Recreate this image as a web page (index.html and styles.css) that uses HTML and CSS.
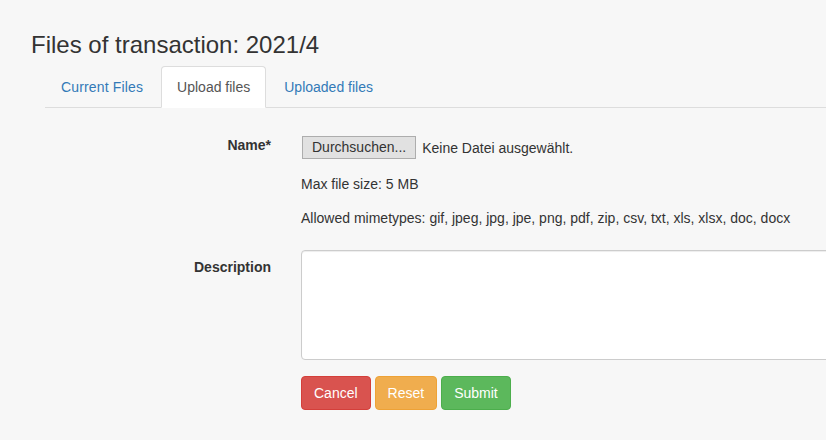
FILE: index.html
```html
<!DOCTYPE html>
<html lang="en">
<head>
<meta charset="utf-8">
<title>Files of transaction</title>
<link rel="stylesheet" href="styles.css">
</head>
<body>
<div class="page">
  <h1 class="title">Files of transaction: 2021/4</h1>
  <ul class="tabs">
    <li class="tab"><a href="#">Current Files</a></li>
    <li class="tab active"><a href="#">Upload files</a></li>
    <li class="tab"><a href="#">Uploaded files</a></li>
  </ul>
  <form class="form">
    <div class="row">
      <label class="label">Name*</label>
      <div class="field">
        <div class="file-picker">
          <span class="file-btn">Durchsuchen...</span>
          <span class="file-name">Keine Datei ausgewählt.</span>
        </div>
        <p class="help">Max file size: 5 MB</p>
        <p class="help">Allowed mimetypes: gif, jpeg, jpg, jpe, png, pdf, zip, csv, txt, xls, xlsx, doc, docx</p>
      </div>
    </div>
    <div class="row row-desc">
      <label class="label">Description</label>
      <div class="field">
        <textarea class="textarea"></textarea>
      </div>
    </div>
    <div class="row row-actions">
      <span></span>
      <div class="actions">
        <button type="button" class="btn btn-danger">Cancel</button>
        <button type="button" class="btn btn-warning">Reset</button>
        <button type="button" class="btn btn-success">Submit</button>
      </div>
    </div>
  </form>
</div>
</body>
</html>
```

FILE: styles.css
```css
html, body {
  margin: 0;
  padding: 0;
  background: #f7f7f7;
  overflow: hidden;
}
body {
  font-family: "Liberation Sans", Arial, sans-serif;
  font-size: 14px;
  line-height: 20px;
  color: #333;
}
.page {
  width: 1000px;
  padding-left: 31px;
}
.title {
  margin: 32px 0 8px;
  font-size: 24px;
  line-height: 26px;
  font-weight: 400;
  color: #333;
}
.tabs {
  list-style: none;
  margin: 0 0 0 14px;
  padding: 0;
  display: flex;
  border-bottom: 1px solid #ddd;
}
.tab {
  margin-bottom: -1px;
}
.tab a {
  display: block;
  margin-right: 2px;
  padding: 10px 15px;
  line-height: 20px;
  border: 1px solid transparent;
  border-radius: 4px 4px 0 0;
  color: #337ab7;
  text-decoration: none;
}
.tab:first-child a {
  letter-spacing: 0.15px;
}
.tab.active a {
  background: #fff;
  border-color: #ddd #ddd transparent;
  color: #555;
}
.form {
  margin-top: 20px;
}
.row {
  display: grid;
  grid-template-columns: 240px 1fr;
  column-gap: 30px;
}
.label {
  text-align: right;
  font-weight: 700;
  padding-top: 7px;
}
.file-picker {
  display: flex;
  align-items: center;
  padding-top: 8px;
}
.file-btn {
  display: inline-block;
  box-sizing: border-box;
  height: 23px;
  padding: 0 9px;
  line-height: 21px;
  background: #e1e1e1;
  border: 1px solid #adadad;
  margin-left: 1px;
}
.file-name {
  margin-left: 6px;
}
.help {
  margin: 15px 0 0;
  font-size: 14px;
}
.help + .help {
  margin-top: 14px;
}
.row-desc {
  margin-top: 22px;
}
.textarea {
  display: block;
  box-sizing: border-box;
  width: 600px;
  height: 110px;
  margin: 0;
  border: 1px solid #ccc;
  border-radius: 4px;
  background: #fff;
  resize: none;
  box-shadow: inset 0 1px 1px rgba(0,0,0,.075);
}
.row-actions {
  margin-top: 16px;
}
.actions {
  display: flex;
  gap: 4px;
}
.btn {
  box-sizing: border-box;
  height: 34px;
  padding: 6px 12px;
  font-family: inherit;
  font-size: 14px;
  line-height: 20px;
  border: 1px solid transparent;
  border-radius: 4px;
  color: #fff;
}
.btn-danger {
  background: #d9534f;
  border-color: #d43f3a;
}
.btn-warning {
  background: #f0ad4e;
  border-color: #eea236;
}
.btn-success {
  background: #5cb85c;
  border-color: #4cae4c;
}
```
